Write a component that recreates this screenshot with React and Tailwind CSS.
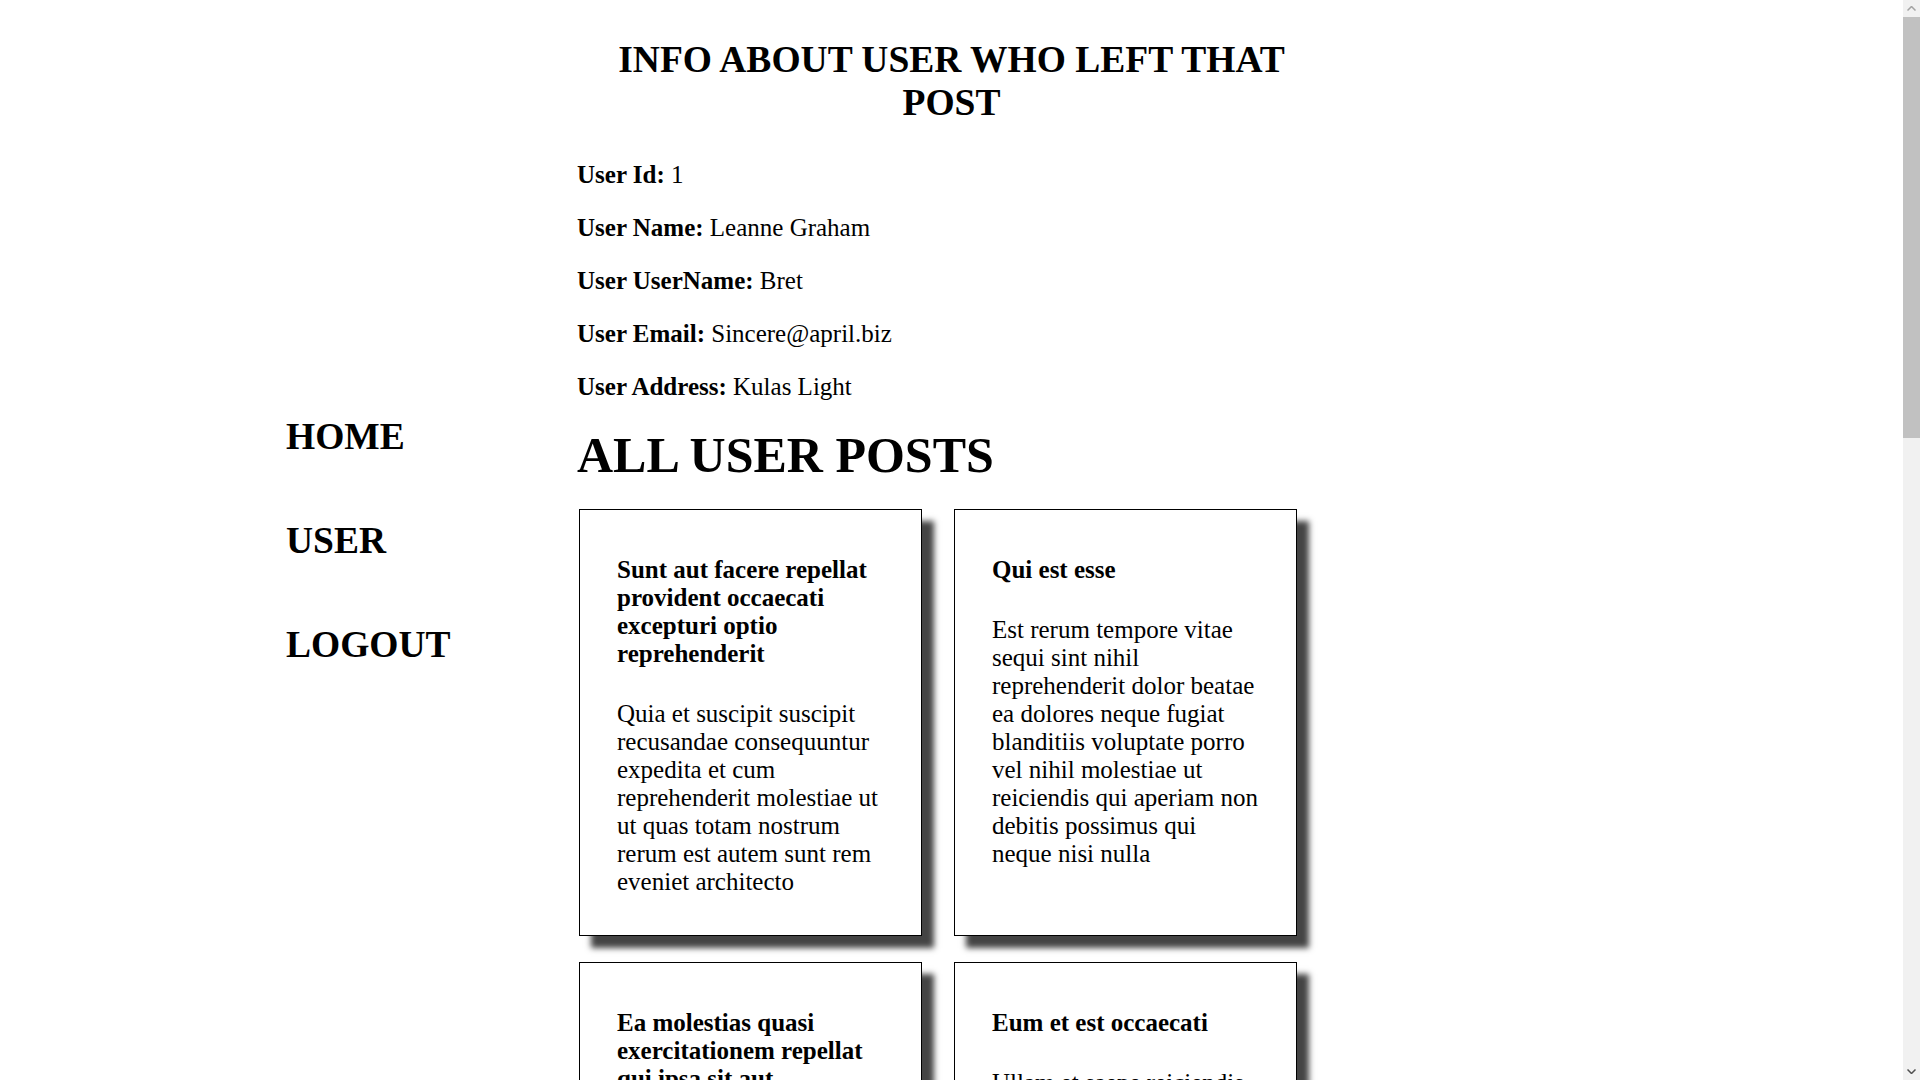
import React from 'react';

const user = [
    ['User Id:', '1'],
    ['User Name:', 'Leanne Graham'],
    ['User UserName:', 'Bret'],
    ['User Email:', 'Sincere@april.biz'],
    ['User Address:', 'Kulas Light'],
];

const posts = [
    {
        title: 'Sunt aut facere repellat provident occaecati excepturi optio reprehenderit',
        body: 'Quia et suscipit suscipit recusandae consequuntur expedita et cum reprehenderit molestiae ut ut quas totam nostrum rerum est autem sunt rem eveniet architecto',
    },
    {
        title: 'Qui est esse',
        body: 'Est rerum tempore vitae sequi sint nihil reprehenderit dolor beatae ea dolores neque fugiat blanditiis voluptate porro vel nihil molestiae ut reiciendis qui aperiam non debitis possimus qui neque nisi nulla',
    },
    {
        title: 'Ea molestias quasi exercitationem repellat qui ipsa sit aut',
        body: 'Et iusto sed quo iure voluptatem occaecati omnis eligendi aut ad voluptatem doloribus vel accusantium quis pariatur molestiae porro eius odio et labore et velit aut',
    },
    {
        title: 'Eum et est occaecati',
        body: 'Ullam et saepe reiciendis voluptatem adipisci sit amet autem assumenda provident rerum culpa quis hic commodi nesciunt rem tenetur doloremque ipsam iure quis sunt voluptatem rerum illo velit',
    },
];

const PostCard = ({ title, body }) => (
    <div className="border border-black bg-white px-[37px] pt-[46px] pb-[39px] shadow-[12px_12px_6px_#444]">
        <h3 className="text-[25px] font-bold leading-[28px]">{title}</h3>
        <p className="mt-[32px] text-[25px] leading-[28px]">{body}</p>
    </div>
);

// page scrollbar as it appears in the screenshot
const ScrollBar = () => (
    <div className="flex w-[17px] shrink-0 flex-col bg-[#f1f1f1]">
        <div className="flex h-[17px] items-center justify-center">
            <svg width="9" height="5" viewBox="0 0 9 5"><path d="M0.5 4.5 L4.5 0.5 L8.5 4.5" fill="none" stroke="#a3a3a3" strokeWidth="1.5" /></svg>
        </div>
        <div className="h-[421px] bg-[#c1c1c1]" />
        <div className="flex-1" />
        <div className="flex h-[17px] items-center justify-center">
            <svg width="9" height="5" viewBox="0 0 9 5"><path d="M0.5 0.5 L4.5 4.5 L8.5 0.5" fill="none" stroke="#505050" strokeWidth="1.5" /></svg>
        </div>
    </div>
);

export default function App() {
    return (
        <div className="flex h-screen bg-white text-black font-['Liberation_Serif','Times_New_Roman',serif]">
            <div className="flex-1 overflow-y-auto [scrollbar-width:none]">
                <h2 className="mx-auto w-[720px] pt-[38px] text-center text-[37.5px] font-bold leading-[43px]">
                    INFO ABOUT USER WHO LEFT THAT POST
                </h2>

                <div className="grid grid-cols-[291px_1fr] pl-[286px] pb-[60px]">
                    <div className="col-start-2 mt-[36px] flex flex-col gap-[24px]">
                        {user.map(([label, value]) => (
                            <p key={label} className="text-[25px] leading-[29px]">
                                <b>{label}</b> {value}
                            </p>
                        ))}
                    </div>

                    <nav className="col-start-1 mt-[14px] flex flex-col gap-[61px]">
                        {['HOME', 'USER', 'LOGOUT'].map((item) => (
                            <a key={item} href="#" className="text-[37.5px] font-bold leading-[43px]">
                                {item}
                            </a>
                        ))}
                    </nav>

                    <main className="col-start-2 mt-[26px]">
                        <h1 className="text-[50px] font-bold leading-[57px]">ALL USER POSTS</h1>
                        <div className="mt-[25px] ml-[2px] grid grid-cols-[343px_343px] gap-x-[32px] gap-y-[26px]">
                            {posts.map((post) => (
                                <PostCard key={post.title} {...post} />
                            ))}
                        </div>
                    </main>
                </div>
            </div>
            <ScrollBar />
        </div>
    );
}
